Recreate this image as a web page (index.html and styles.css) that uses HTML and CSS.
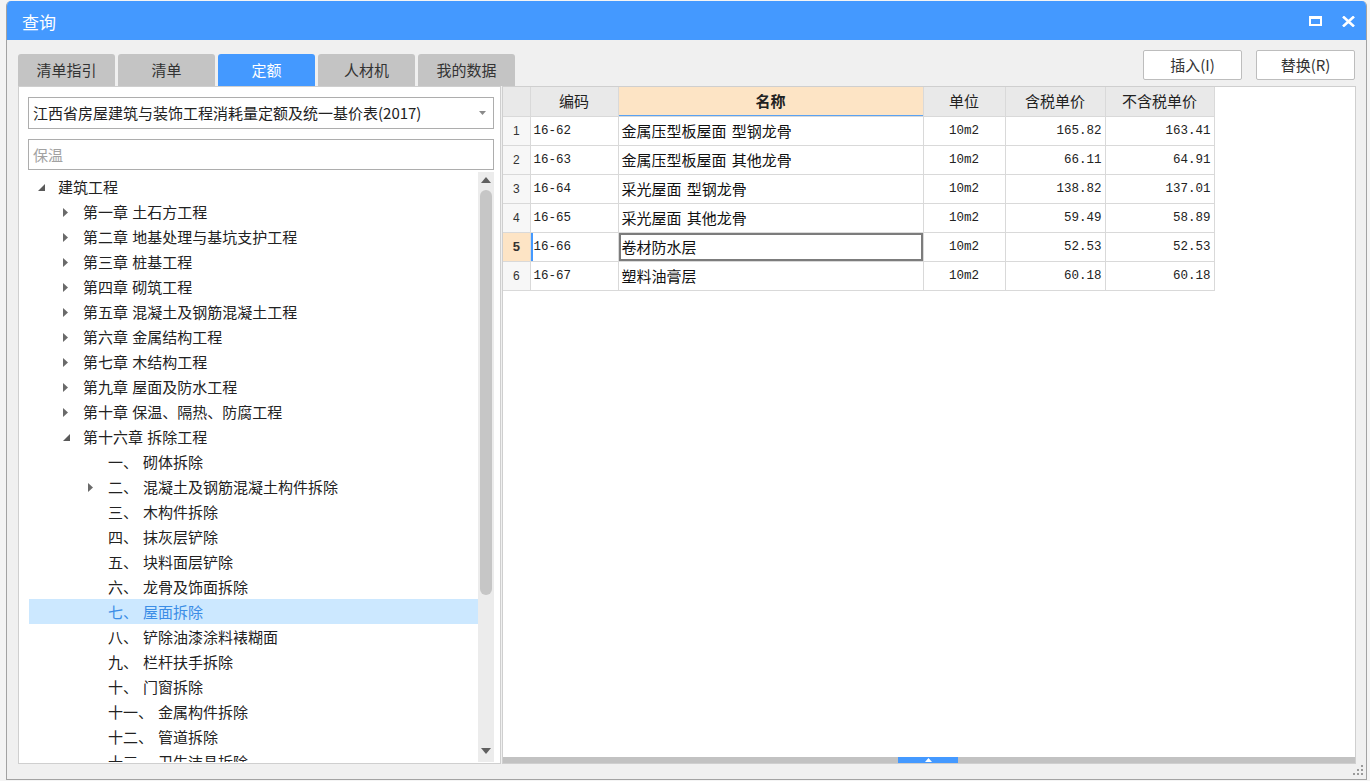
FILE: index.html
```html
<!DOCTYPE html>
<html lang="zh-CN">
<head>
<meta charset="utf-8">
<title>查询</title>
<link rel="stylesheet" href="styles.css">
</head>
<body>
<div class="dialog">
  <div class="titlebar">
    <span class="title">查询</span>
    <div class="win-btns">
      <svg class="win-max" width="13" height="10" viewBox="0 0 13 10"><rect x="1" y="1.5" width="11" height="7.5" fill="none" stroke="#fff" stroke-width="2"/><rect x="0" y="0" width="13" height="3" fill="#fff"/></svg>
      <svg class="win-close" width="13" height="11" viewBox="0 0 13 11"><path d="M1 0.5 L12 10.5 M12 0.5 L1 10.5" stroke="#fff" stroke-width="2.6"/></svg>
    </div>
  </div>
  <div class="content">
    <div class="toprow">
      <div class="tabs">
        <div class="tab">清单指引</div>
        <div class="tab">清单</div>
        <div class="tab active">定额</div>
        <div class="tab">人材机</div>
        <div class="tab">我的数据</div>
      </div>
      <div class="actions">
        <button class="btn">插入(I)</button>
        <button class="btn">替换(R)</button>
      </div>
    </div>
    <div class="panels">
      <div class="left-panel">
        <div class="select">
          <span class="select-text">江西省房屋建筑与装饰工程消耗量定额及统一基价表(2017)</span>
          <svg class="select-caret" width="7" height="4" viewBox="0 0 7 4"><path d="M0 0 L7 0 L3.5 4Z" fill="#8a8a8a"/></svg>
        </div>
        <div class="search">保温</div>
        <div class="tree-wrap">
          <div class="tree">
            <div class="node l0"><span class="tw"><svg width="8" height="8" viewBox="0 0 8 8"><path d="M7 0 L7 7 L0 7Z" fill="#5a5a5a"/></svg></span><span class="lbl">建筑工程</span></div>
            <div class="node l1"><span class="tw"><svg width="6" height="9" viewBox="0 0 6 9"><path d="M0 0 L5 4.5 L0 9Z" fill="#6a6a6a"/></svg></span><span class="lbl">第一章 土石方工程</span></div>
            <div class="node l1"><span class="tw"><svg width="6" height="9" viewBox="0 0 6 9"><path d="M0 0 L5 4.5 L0 9Z" fill="#6a6a6a"/></svg></span><span class="lbl">第二章 地基处理与基坑支护工程</span></div>
            <div class="node l1"><span class="tw"><svg width="6" height="9" viewBox="0 0 6 9"><path d="M0 0 L5 4.5 L0 9Z" fill="#6a6a6a"/></svg></span><span class="lbl">第三章 桩基工程</span></div>
            <div class="node l1"><span class="tw"><svg width="6" height="9" viewBox="0 0 6 9"><path d="M0 0 L5 4.5 L0 9Z" fill="#6a6a6a"/></svg></span><span class="lbl">第四章 砌筑工程</span></div>
            <div class="node l1"><span class="tw"><svg width="6" height="9" viewBox="0 0 6 9"><path d="M0 0 L5 4.5 L0 9Z" fill="#6a6a6a"/></svg></span><span class="lbl">第五章 混凝土及钢筋混凝土工程</span></div>
            <div class="node l1"><span class="tw"><svg width="6" height="9" viewBox="0 0 6 9"><path d="M0 0 L5 4.5 L0 9Z" fill="#6a6a6a"/></svg></span><span class="lbl">第六章 金属结构工程</span></div>
            <div class="node l1"><span class="tw"><svg width="6" height="9" viewBox="0 0 6 9"><path d="M0 0 L5 4.5 L0 9Z" fill="#6a6a6a"/></svg></span><span class="lbl">第七章 木结构工程</span></div>
            <div class="node l1"><span class="tw"><svg width="6" height="9" viewBox="0 0 6 9"><path d="M0 0 L5 4.5 L0 9Z" fill="#6a6a6a"/></svg></span><span class="lbl">第九章 屋面及防水工程</span></div>
            <div class="node l1"><span class="tw"><svg width="6" height="9" viewBox="0 0 6 9"><path d="M0 0 L5 4.5 L0 9Z" fill="#6a6a6a"/></svg></span><span class="lbl">第十章 保温、隔热、防腐工程</span></div>
            <div class="node l1"><span class="tw"><svg width="8" height="8" viewBox="0 0 8 8"><path d="M7 0 L7 7 L0 7Z" fill="#5a5a5a"/></svg></span><span class="lbl">第十六章 拆除工程</span></div>
            <div class="node l2"><span class="tw"></span><span class="lbl"><span class="ord">一、</span>砌体拆除</span></div>
            <div class="node l2"><span class="tw"><svg width="6" height="9" viewBox="0 0 6 9"><path d="M0 0 L5 4.5 L0 9Z" fill="#6a6a6a"/></svg></span><span class="lbl"><span class="ord">二、</span>混凝土及钢筋混凝土构件拆除</span></div>
            <div class="node l2"><span class="tw"></span><span class="lbl"><span class="ord">三、</span>木构件拆除</span></div>
            <div class="node l2"><span class="tw"></span><span class="lbl"><span class="ord">四、</span>抹灰层铲除</span></div>
            <div class="node l2"><span class="tw"></span><span class="lbl"><span class="ord">五、</span>块料面层铲除</span></div>
            <div class="node l2"><span class="tw"></span><span class="lbl"><span class="ord">六、</span>龙骨及饰面拆除</span></div>
            <div class="node l2 selected"><span class="tw"></span><span class="lbl"><span class="ord">七、</span>屋面拆除</span></div>
            <div class="node l2"><span class="tw"></span><span class="lbl"><span class="ord">八、</span>铲除油漆涂料裱糊面</span></div>
            <div class="node l2"><span class="tw"></span><span class="lbl"><span class="ord">九、</span>栏杆扶手拆除</span></div>
            <div class="node l2"><span class="tw"></span><span class="lbl"><span class="ord">十、</span>门窗拆除</span></div>
            <div class="node l2"><span class="tw"></span><span class="lbl"><span class="ord">十一、</span>金属构件拆除</span></div>
            <div class="node l2"><span class="tw"></span><span class="lbl"><span class="ord">十二、</span>管道拆除</span></div>
            <div class="node l2"><span class="tw"></span><span class="lbl"><span class="ord">十三、</span>卫生洁具拆除</span></div>
          </div>
          <div class="vscroll">
            <div class="vs-arrow up"><svg width="10" height="6" viewBox="0 0 10 6"><path d="M0 6 L5 0 L10 6Z" fill="#606060"/></svg></div>
            <div class="vs-thumb"></div>
            <div class="vs-track"></div>
            <div class="vs-arrow down"><svg width="10" height="6" viewBox="0 0 10 6"><path d="M0 0 L10 0 L5 6Z" fill="#606060"/></svg></div>
          </div>
        </div>
      </div>
      <div class="right-panel">
        <div class="grid-area">
          <table class="grid">
            <colgroup>
              <col class="c-no"><col class="c-code"><col class="c-name"><col class="c-unit"><col class="c-p1"><col class="c-p2">
            </colgroup>
            <thead>
              <tr>
                <th class="rn"></th><th>编码</th><th class="name-h">名称</th><th>单位</th><th>含税单价</th><th>不含税单价</th>
              </tr>
            </thead>
            <tbody>
              <tr><td class="rn">1</td><td class="code">16-62</td><td class="name">金属压型板屋面 型钢龙骨</td><td class="unit">10m2</td><td class="num">165.82</td><td class="num">163.41</td></tr>
              <tr><td class="rn">2</td><td class="code">16-63</td><td class="name">金属压型板屋面 其他龙骨</td><td class="unit">10m2</td><td class="num">66.11</td><td class="num">64.91</td></tr>
              <tr><td class="rn">3</td><td class="code">16-64</td><td class="name">采光屋面 型钢龙骨</td><td class="unit">10m2</td><td class="num">138.82</td><td class="num">137.01</td></tr>
              <tr><td class="rn">4</td><td class="code">16-65</td><td class="name">采光屋面 其他龙骨</td><td class="unit">10m2</td><td class="num">59.49</td><td class="num">58.89</td></tr>
              <tr class="cur"><td class="rn">5</td><td class="code">16-66</td><td class="name sel">卷材防水层</td><td class="unit">10m2</td><td class="num">52.53</td><td class="num">52.53</td></tr>
              <tr><td class="rn">6</td><td class="code">16-67</td><td class="name">塑料油膏层</td><td class="unit">10m2</td><td class="num">60.18</td><td class="num">60.18</td></tr>
            </tbody>
          </table>
        </div>
        <div class="hscroll">
          <div class="hs-thumb"><svg width="7" height="4" viewBox="0 0 7 4"><path d="M0 4 L3.5 0 L7 4Z" fill="#fff"/></svg></div>
        </div>
      </div>
    </div>
  </div>
  <svg class="grip" width="11" height="11" viewBox="0 0 11 11">
    <rect x="8" y="0" width="2" height="2" fill="#9a9a9a"/>
    <rect x="4" y="4" width="2" height="2" fill="#9a9a9a"/>
    <rect x="8" y="4" width="2" height="2" fill="#9a9a9a"/>
    <rect x="0" y="8" width="2" height="2" fill="#9a9a9a"/>
    <rect x="4" y="8" width="2" height="2" fill="#9a9a9a"/>
    <rect x="8" y="8" width="2" height="2" fill="#9a9a9a"/>
  </svg>
</div>
</body>
</html>
```

FILE: styles.css
```css
* { box-sizing: border-box; }

html, body {
  margin: 0;
  padding: 0;
  height: 100%;
  overflow: hidden;
}

body {
  background: #f4f4f4;
  font-family: "Noto Sans CJK SC", "Noto Sans", sans-serif;
  font-size: 15px;
  color: #222;
}

.dialog {
  position: relative;
  margin: 1px 0 0 6px;
  width: 1361px;
  height: 779px;
  background: #f0f0f0;
  border: 1px solid #a3a3a3;
  border-top: none;
  border-radius: 5px 5px 0 0;
  overflow: hidden;
  display: flex;
  flex-direction: column;
}

.titlebar {
  height: 39px;
  flex: none;
  background: #4499ff;
  color: #fff;
  display: flex;
  align-items: center;
  justify-content: space-between;
  padding: 0 11px 0 15px;
}

.title {
  font-size: 17px;
  line-height: 20px;
  margin-top: 2px;
}

.win-btns {
  display: flex;
  align-items: center;
  gap: 20px;
  margin-top: 1px;
}

.win-max { display: block; }
.win-close { display: block; }

.content {
  flex: 1;
  display: flex;
  flex-direction: column;
  padding: 10px 10px 0 11px;
}

.toprow {
  height: 36px;
  flex: none;
  display: flex;
  justify-content: space-between;
}

.tabs {
  align-self: flex-end;
  display: flex;
  gap: 3px;
}

.tab {
  width: 97px;
  height: 32px;
  background: #c4c4c4;
  border-radius: 3px 3px 0 0;
  color: #333;
  font-size: 15px;
  line-height: 32px;
  text-align: center;
}

.tab.active {
  background: #4499ff;
  color: #fff;
}

.actions {
  align-self: flex-start;
  display: flex;
  gap: 14px;
  margin-right: 1px;
}

.btn {
  width: 99px;
  height: 30px;
  background: #fff;
  border: 1px solid #bdbdbd;
  border-radius: 2px;
  font-family: "Noto Sans CJK SC", "Noto Sans", sans-serif;
  font-size: 15px;
  color: #333;
  padding: 0;
  line-height: 28px;
}

.panels {
  height: 678px;
  flex: none;
  display: flex;
  gap: 1px;
}

.left-panel {
  width: 483px;
  flex: none;
  background: #fff;
  border: 1px solid #cfcfcf;
  padding: 10px 6px 1px 9px;
  display: flex;
  flex-direction: column;
}

.select {
  height: 32px;
  flex: none;
  border: 1px solid #adadad;
  display: flex;
  align-items: center;
  justify-content: space-between;
  padding: 0 7px 0 4px;
}

.select-text {
  font-size: 15px;
  line-height: 20px;
  color: #222;
  white-space: nowrap;
}

.select-caret { display: block; }

.search {
  margin-top: 10px;
  height: 31px;
  flex: none;
  border: 1px solid #adadad;
  padding-left: 4px;
  color: #a2a2a2;
  font-size: 15px;
  line-height: 29px;
}

.tree-wrap {
  margin-top: 2px;
  flex: 1;
  display: flex;
  overflow: hidden;
}

.tree {
  flex: 1;
  margin-left: 1px;
  padding-top: 2px;
  overflow: hidden;
}

.node {
  height: 25px;
  display: flex;
  align-items: center;
  white-space: nowrap;
  font-size: 15px;
  color: #222;
  word-spacing: 1px;
}

.node.l0 { padding-left: 9px; }
.node.l1 { padding-left: 34px; }
.node.l2 { padding-left: 59px; }

.tw {
  width: 20px;
  flex: none;
  display: flex;
  align-items: center;
}

.tw svg { display: block; margin-top: 2px; }

.lbl { line-height: 25px; }

.ord {
  display: inline-block;
  margin-right: 5px;
}

.node.selected {
  background: #cce8ff;
  color: #3b8de6;
}

.vscroll {
  width: 16px;
  flex: none;
  background: #ececec;
  display: flex;
  flex-direction: column;
  align-items: center;
}

.vs-arrow {
  height: 16px;
  flex: none;
  display: flex;
  align-items: center;
  justify-content: center;
}

.vs-arrow.down { height: 14px; align-items: flex-start; }

.vs-thumb {
  width: 12px;
  height: 405px;
  flex: none;
  margin-top: 2px;
  background: #c6c6c6;
  border-radius: 6px;
}

.vs-track { flex: 1; }

.right-panel {
  flex: 1;
  background: #fff;
  border: 1px solid #cfcfcf;
  display: flex;
  flex-direction: column;
}

.grid-area {
  flex: 1;
  overflow: hidden;
}

.grid {
  border-collapse: collapse;
  table-layout: fixed;
  width: 711px;
}

.c-no { width: 27px; }
.c-code { width: 88px; }
.c-name { width: 305px; }
.c-unit { width: 82px; }
.c-p1 { width: 100px; }
.c-p2 { width: 109px; }

.grid th, .grid td {
  border: 1px solid #d9d9d9;
  padding: 0;
  white-space: nowrap;
  overflow: hidden;
  line-height: 18px;
}

.grid thead tr { height: 29px; }
.grid tbody tr { height: 29px; }

.grid thead tr th { border-top: none; }
.grid tr > :first-child { border-left: none; }

.grid th {
  background: #e9e9e9;
  font-weight: normal;
  font-size: 15px;
  color: #222;
  text-align: center;
}

.grid th.name-h {
  background: #fde4c5;
  font-weight: bold;
  box-shadow: inset 0 -1px 0 #5aa2f2;
}

.grid td.rn {
  background: #f7f7f7;
  text-align: center;
  font-family: "Liberation Sans", sans-serif;
  font-size: 12px;
  color: #333;
}

.grid tr.cur td.rn {
  background: #fde4c5;
  font-weight: bold;
  font-size: 13px;
}

.grid td.code {
  font-family: "Liberation Mono", monospace;
  font-size: 12.5px;
  padding-left: 3px;
  color: #222;
}

.grid tr.cur td.code {
  box-shadow: inset 2px 0 0 #4499ff;
}

.grid td.name {
  font-size: 15px;
  padding-left: 3px;
  color: #111;
  word-spacing: 2px;
}

.grid td.name.sel {
  box-shadow: inset 0 0 0 2px #7c7c7c;
}

.grid td.unit {
  font-family: "Liberation Mono", monospace;
  font-size: 12.5px;
  text-align: center;
  color: #222;
}

.grid td.num {
  font-family: "Liberation Mono", monospace;
  font-size: 12.5px;
  text-align: right;
  padding-right: 3px;
  color: #222;
}

.hscroll {
  height: 6px;
  flex: none;
  background: #c2c2c2;
  display: flex;
}

.hs-thumb {
  margin-left: 395px;
  width: 60px;
  height: 6px;
  background: #4499ff;
  display: flex;
  align-items: flex-end;
  justify-content: center;
}

.hs-thumb svg { display: block; margin-bottom: 1px; }

.grip {
  position: absolute;
  right: 2px;
  bottom: 3px;
  display: block;
}
```
